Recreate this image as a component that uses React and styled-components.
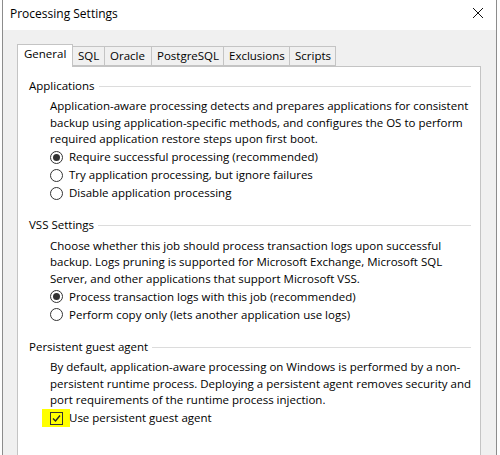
import React from 'react';
import styled, { createGlobalStyle } from 'styled-components';

const GlobalStyle = createGlobalStyle`
  html, body {
    margin: 0;
    padding: 0;
    background: #fdfdfd;
    overflow: hidden;
  }
  body {
    font-family: "Open Sans", "Noto Sans", "Liberation Sans", sans-serif;
    font-size: 11.5px;
    color: #000;
  }
`;

const Window = styled.div`
  margin-left: 2px;
  width: 493px;
  height: 470px;
  border-left: 1px solid #8c8c8c;
  border-right: 1px solid #8c8c8c;
  display: flex;
  flex-direction: column;
`;

const TitleBar = styled.div`
  height: 30px;
  flex-shrink: 0;
  background: #fff;
  display: flex;
  align-items: center;
  justify-content: space-between;
  padding: 0 10px 4px 7px;
  box-sizing: border-box;
  font-size: 12px;
`;

const CloseButton = styled.div`
  width: 12px;
  height: 12px;
  display: flex;
  margin: 0 2px 0 0;
`;

const Body = styled.div`
  flex: 1;
  background: #f0f0f0;
  padding: 14px 15px 0 14px;
  display: flex;
  flex-direction: column;
`;

const TabStrip = styled.div`
  display: flex;
  align-items: flex-end;
  height: 22px;
  position: relative;
  z-index: 1;
`;

const Tab = styled.div`
  width: ${p => p.$w}px;
  box-sizing: border-box;
  height: ${p => (p.$active ? 23 : 20)}px;
  margin-bottom: ${p => (p.$active ? -1 : 0)}px;
  background: ${p => (p.$active ? '#fff' : '#f0f0f0')};
  border: 1px solid #c4c4c4;
  border-bottom: ${p => (p.$active ? 'none' : '1px solid #c4c4c4')};
  border-left-width: ${p => (p.$first ? 1 : 0)}px;
  display: flex;
  align-items: center;
  padding-left: ${p => (p.$active ? 6 : 5)}px;
  padding-bottom: ${p => (p.$active ? 5 : 2)}px;
  white-space: nowrap;
`;

const Panel = styled.div`
  width: 464px;
  box-sizing: border-box;
  flex: 1;
  background: #fff;
  border: 1px solid #c4c4c4;
  padding: 10px 9px 0 11px;
`;

const Group = styled.div`
  & + & {
    margin-top: 15px;
  }
`;

const GroupHeader = styled.div`
  display: flex;
  align-items: center;
  height: 16px;
  gap: 4px;
  white-space: nowrap;

  &::after {
    content: '';
    flex: 1;
    height: 1px;
    background: #dcdcdc;
    margin-top: 2px;
  }
`;

const GroupBody = styled.div`
  padding-left: 21px;
  padding-top: 5px;
`;

const Text = styled.div`
  line-height: 16.5px;
  white-space: nowrap;
`;

const OptionRow = styled.div`
  display: flex;
  align-items: center;
  height: 18px;
  gap: 6px;
  white-space: nowrap;
`;

const RadioCircle = styled.span`
  width: 13px;
  height: 13px;
  box-sizing: border-box;
  border-radius: 50%;
  border: 1px solid #333;
  background: #fff;
  display: flex;
  align-items: center;
  justify-content: center;
  margin-top: 1px;

  &::after {
    content: '';
    width: 7px;
    height: 7px;
    border-radius: 50%;
    background: #333;
    display: ${p => (p.$checked ? 'block' : 'none')};
  }
`;

const Marker = styled.span`
  display: flex;
  background: #ffff00;
  padding: 3px 7px 2px 8px;
  margin-left: -8px;
`;

const CheckBox = styled.span`
  width: 13px;
  height: 13px;
  box-sizing: border-box;
  border: 1px solid #333;
  display: flex;
  align-items: center;
  justify-content: center;
`;

const CheckLabel = styled.span`
  margin-left: -7px;
`;

const tabs = [
  ['General', 56],
  ['SQL', 32],
  ['Oracle', 47],
  ['PostgreSQL', 72],
  ['Exclusions', 66],
  ['Scripts', 46],
];

function Radio({ checked, children }) {
  return (
    <OptionRow>
      <RadioCircle $checked={checked} />
      <span>{children}</span>
    </OptionRow>
  );
}

export default function App() {
  return (
    <>
      <GlobalStyle />
      <Window>
        <TitleBar>
          <span>Processing Settings</span>
          <CloseButton>
            <svg width="12" height="12" viewBox="0 0 12 12">
              <path d="M1 1 L11 11 M11 1 L1 11" stroke="#111" strokeWidth="1" fill="none" />
            </svg>
          </CloseButton>
        </TitleBar>
        <Body>
          <TabStrip>
            {tabs.map(([name, w], i) => (
              <Tab key={name} $w={w} $active={i === 0} $first={i === 0}>
                {name}
              </Tab>
            ))}
          </TabStrip>
          <Panel>
            <Group>
              <GroupHeader>Applications</GroupHeader>
              <GroupBody>
                <Text>
                  Application-aware processing detects and prepares applications for consistent<br />
                  backup using application-specific methods, and configures the OS to perform<br />
                  required application restore steps upon first boot.
                </Text>
                <Radio checked>Require successful processing (recommended)</Radio>
                <Radio>Try application processing, but ignore failures</Radio>
                <Radio>Disable application processing</Radio>
              </GroupBody>
            </Group>
            <Group>
              <GroupHeader>VSS Settings</GroupHeader>
              <GroupBody>
                <Text>
                  Choose whether this job should process transaction logs upon successful<br />
                  backup. Logs pruning is supported for Microsoft Exchange, Microsoft SQL<br />
                  Server, and other applications that support Microsoft VSS.
                </Text>
                <Radio checked>Process transaction logs with this job (recommended)</Radio>
                <Radio>Perform copy only (lets another application use logs)</Radio>
              </GroupBody>
            </Group>
            <Group>
              <GroupHeader>Persistent guest agent</GroupHeader>
              <GroupBody>
                <Text>
                  By default, application-aware processing on Windows is performed by a non-<br />
                  persistent runtime process. Deploying a persistent agent removes security and<br />
                  port requirements of the runtime process injection.
                </Text>
                <OptionRow>
                  <Marker>
                    <CheckBox>
                      <svg width="9" height="9" viewBox="0 0 9 9">
                        <path d="M1 4.5 L3.5 7 L8 1.5" stroke="#222" strokeWidth="1.4" fill="none" />
                      </svg>
                    </CheckBox>
                  </Marker>
                  <CheckLabel>Use persistent guest agent</CheckLabel>
                </OptionRow>
              </GroupBody>
            </Group>
          </Panel>
        </Body>
      </Window>
    </>
  );
}
